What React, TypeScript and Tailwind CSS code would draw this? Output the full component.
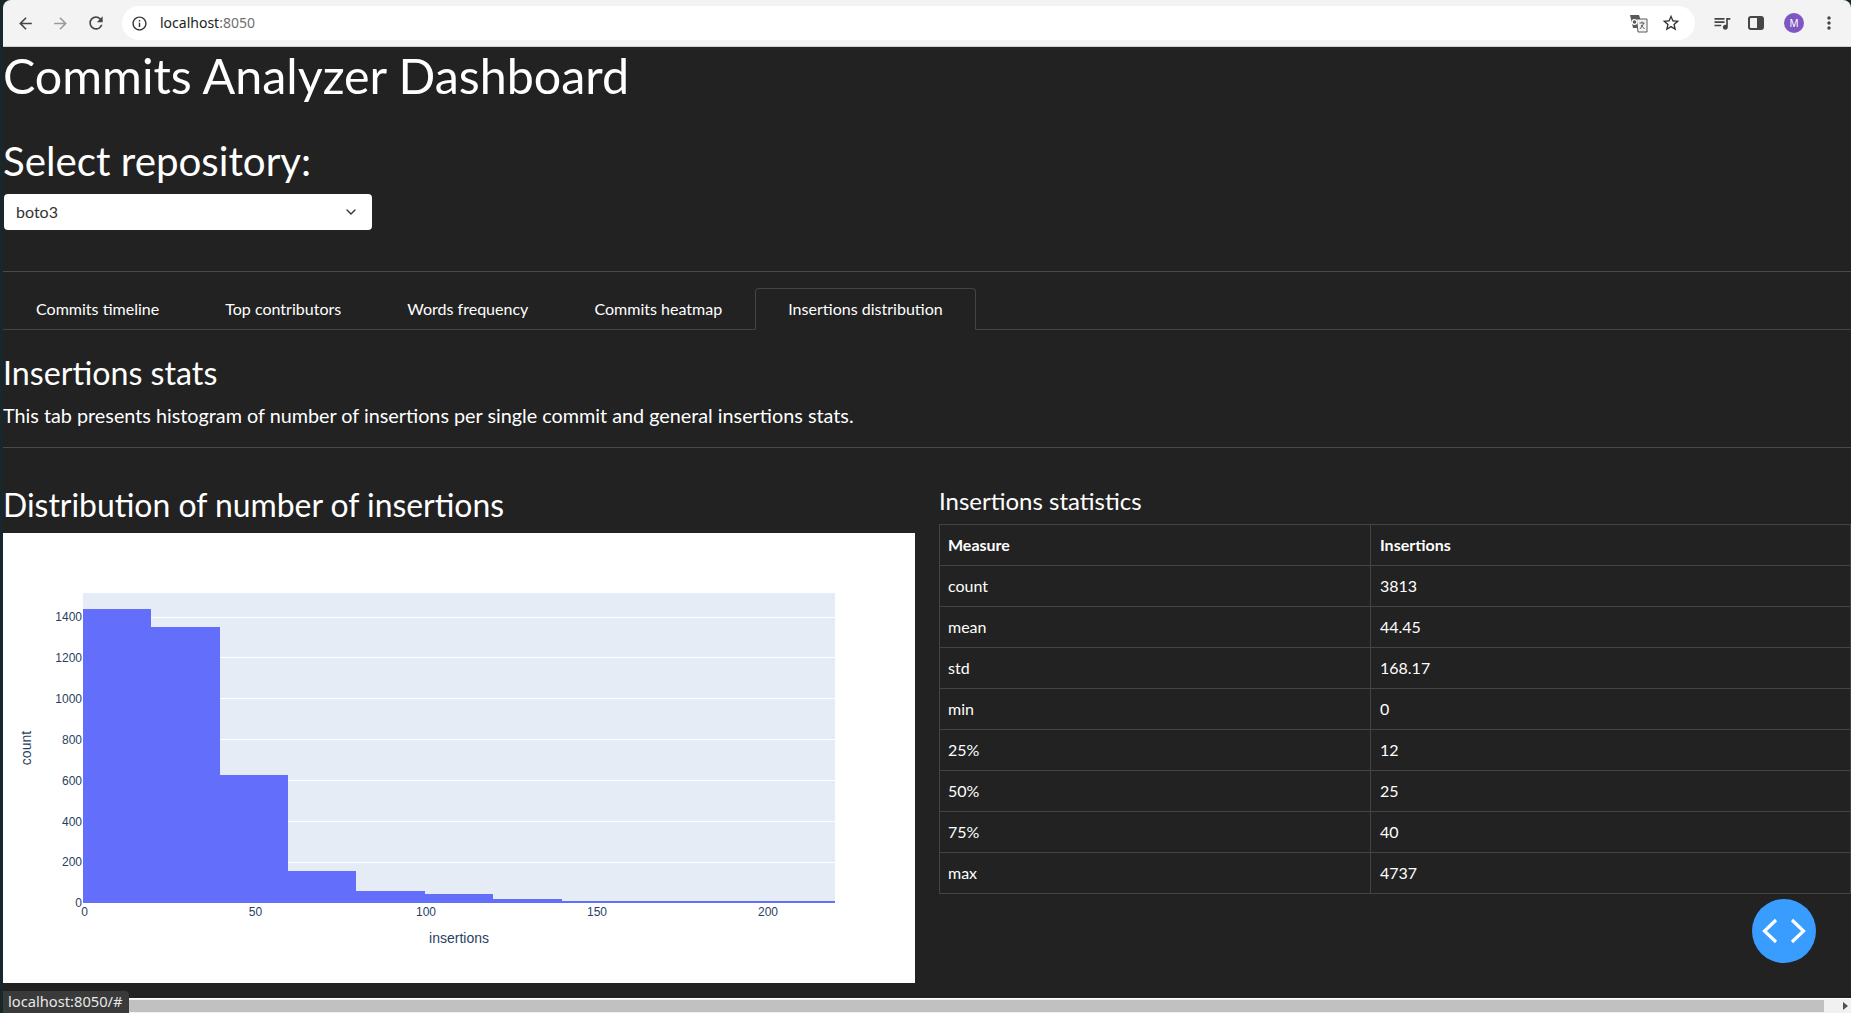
import {
  MdArrowBack,
  MdArrowForward,
  MdInfoOutline,
  MdMoreVert,
  MdQueueMusic,
  MdRefresh,
  MdStarBorder,
} from "react-icons/md";
import { ChevronDown } from "lucide-react";

const TABS = ["Commits timeline", "Top contributors", "Words frequency", "Commits heatmap", "Insertions distribution"];

const STATS = [
  ["count", "3813"],
  ["mean", "44.45"],
  ["std", "168.17"],
  ["min", "0"],
  ["25%", "12"],
  ["50%", "25"],
  ["75%", "40"],
  ["max", "4737"],
];

// coordinates inside the white chart panel (panel origin = 3,533)
const BARS = [
  [80, 76, 68, 294],
  [148, 94, 69, 276],
  [217, 242, 68, 128],
  [285, 338, 68, 32],
  [353, 358, 69, 12],
  [422, 361, 68, 9],
  [490, 366, 69, 4],
  [559, 368, 273, 2],
];
const Y_TICKS = [
  ["1400", 88],
  ["1200", 129],
  ["1000", 170],
  ["800", 211],
  ["600", 252],
  ["400", 293],
  ["200", 333],
  ["0", 374],
];
const X_TICKS = [
  ["0", 81.5],
  ["50", 252.5],
  ["100", 423],
  ["150", 594],
  ["200", 765],
];

function BrowserBar() {
  return (
    <div className="h-[47px] shrink-0 flex items-center bg-[#f3f3f3] border-b border-[#cfcfcf] rounded-tl-lg rounded-tr-lg text-[#454545] font-['Noto_Sans',sans-serif]">
      <div className="w-[119px] shrink-0 flex items-center pl-[13px] gap-[15px]">
        <MdArrowBack size={19} />
        <MdArrowForward size={19} className="text-[#9a9a9a] ml-[1px]" />
        <MdRefresh size={20} className="ml-[1px]" />
      </div>
      <div className="w-[1573px] h-[34px] shrink-0 bg-white rounded-full flex items-center pl-[9px]">
        <MdInfoOutline size={17} className="text-[#333333]" />
        <span className="ml-[12px] -mt-[2px] text-[14px] text-[#222222]">
          localhost<span className="text-[#6f6f6f]">:8050</span>
        </span>
        <div className="ml-auto mr-[14px] flex items-center gap-[13px]">
          <svg width="19" height="19" viewBox="0 0 19 19">
            <path d="M1 1h9l1 3v10H4z" fill="#5a5a5a" />
            <path d="M7.5 5H18v13H9z" fill="#f3f3f3" stroke="#5a5a5a" strokeWidth="1" />
            <circle cx="5.5" cy="8" r="2.4" fill="none" stroke="#ffffff" strokeWidth="1.2" />
            <path d="M10.5 9h5M13 7.5v1.5M11 15l4-6M12 11l3.5 4" fill="none" stroke="#5a5a5a" strokeWidth="1" />
          </svg>
          <MdStarBorder size={20} className="text-[#333333]" />
        </div>
      </div>
      <div className="flex-1 flex items-center pl-[17px] gap-[16px]">
        <MdQueueMusic size={20} />
        <svg width="16" height="14" viewBox="0 0 16 14">
          <rect x="1" y="1" width="14" height="12" rx="2" fill="none" stroke="#454545" strokeWidth="2" />
          <rect x="9" y="1" width="6" height="12" fill="#454545" />
        </svg>
        <div className="w-5 h-5 ml-[4px] rounded-full bg-[#7e57c2] text-white text-[10px] flex items-center justify-center">
          M
        </div>
        <MdMoreVert size={20} className="-ml-[1px]" />
      </div>
    </div>
  );
}

function Histogram() {
  return (
    <div className="w-[912px] h-[450px] bg-white">
      <svg width="912" height="450" viewBox="0 0 912 450" className="font-['Liberation_Sans',sans-serif]">
        <rect x="80" y="60" width="752" height="310" fill="#e5ecf6" />
        {[84, 124, 165, 206, 247, 288, 329].map((y) => (
          <rect key={y} x="80" y={y} width="752" height="1" fill="#ffffff" />
        ))}
        {BARS.map(([x, y, w, h]) => (
          <rect key={x} x={x} y={y} width={w} height={h} fill="#636efa" />
        ))}
        {Y_TICKS.map(([label, y]) => (
          <text key={label} x="79" y={y} textAnchor="end" fontSize="12" fill="#2a3f5f">
            {label}
          </text>
        ))}
        {X_TICKS.map(([label, x]) => (
          <text key={label} x={x} y="383" textAnchor="middle" fontSize="12" fill="#2a3f5f">
            {label}
          </text>
        ))}
        <text x="456" y="410" textAnchor="middle" fontSize="14" fill="#2a3f5f">
          insertions
        </text>
        <text x="0" y="0" transform="translate(28 215) rotate(-90)" textAnchor="middle" fontSize="14" fill="#2a3f5f">
          count
        </text>
      </svg>
    </div>
  );
}

function StatsTable() {
  return (
    <table className="w-full border-collapse text-[16px] leading-[24px] text-white">
      <thead>
        <tr className="h-[41px]">
          <th className="w-[431px] border border-[#444444] px-2 text-left font-bold">Measure</th>
          <th className="border border-[#444444] pl-[9px] pr-2 text-left font-bold">Insertions</th>
        </tr>
      </thead>
      <tbody>
        {STATS.map(([name, value]) => (
          <tr key={name} className="h-[41px]">
            <td className="border border-[#444444] px-2">{name}</td>
            <td className="border border-[#444444] pl-[9px] pr-2">{value}</td>
          </tr>
        ))}
      </tbody>
    </table>
  );
}

export default function App() {
  return (
    <div className="relative h-[1013px] w-full overflow-hidden flex bg-[#16282a] font-['Lato',sans-serif]">
      <div className="flex-1 min-w-0 ml-[3px] flex flex-col">
        <BrowserBar />
        <main className="flex-1 min-h-0 overflow-hidden bg-[#222222] text-white">
          <h1 className="text-[48.4px] leading-[56px] font-normal">Commits Analyzer Dashboard</h1>
          <h2 className="mt-[34px] text-[40.3px] leading-[48px] font-normal">Select repository:</h2>
          <div className="mt-[9px] ml-px w-[368px] h-9 bg-white rounded flex items-center justify-between pl-[12px] pr-[13px] text-[16px] text-[#333333]">
            boto3
            <ChevronDown size={16} />
          </div>

          <div className="mt-[41px] border-t border-[#4a4a4a]" />

          <div className="mt-[16px] h-[42px] flex items-stretch border-b border-[#444444] text-[16.05px]">
            {TABS.map((tab, i) => (
              <div
                key={tab}
                className={
                  i === 4
                    ? "-mb-px flex items-center px-8 border border-[#444444] border-b-[#222222] rounded-t bg-[#222222]"
                    : "-mb-px flex items-center px-8 border border-transparent"
                }
              >
                {tab}
              </div>
            ))}
          </div>

          <h3 className="mt-[24px] text-[32.2px] leading-[38px] font-normal">Insertions stats</h3>
          <p className="mt-[9px] text-[19.8px] leading-[28px]">
            This tab presents histogram of number of insertions per single commit and general insertions stats.
          </p>

          <div className="mt-[18px] border-t border-[#4a4a4a]" />

          <div className="mt-[37px] grid grid-cols-[936px_1fr]">
            <div>
              <h3 className="text-[31.9px] leading-[41px] font-normal">Distribution of number of insertions</h3>
              <div className="mt-[7px]">
                <Histogram />
              </div>
            </div>
            <div>
              <h4 className="mt-[1px] text-[24px] leading-[29px] font-normal mb-[9px]">Insertions statistics</h4>
              <StatsTable />
            </div>
          </div>
        </main>
        <div className="h-[15px] shrink-0 flex items-center bg-[#f1f1f1] border-t border-white">
          <div className="ml-[126px] w-[1695px] h-3 bg-[#c1c1c1]" />
          <div className="ml-auto mr-[3px] w-0 h-0 border-y-[4px] border-y-transparent border-l-[5px] border-l-[#505050]" />
        </div>
      </div>

      <div className="absolute left-[3px] bottom-0 h-[22px] w-[126px] rounded-tr bg-[#3a3a3a] pl-[5px] text-[14.7px] leading-[20px] text-[#e8e8e8] font-['Noto_Sans',sans-serif]">
        localhost:8050/#
      </div>

      <div className="absolute left-[1752px] top-[899px] w-16 h-16 rounded-full bg-[#399dff] flex items-center justify-center">
        <svg width="44" height="28" viewBox="0 0 44 28" fill="none" stroke="#ffffff" strokeWidth="3.2">
          <path d="M14 3 2.5 14 14 25" />
          <path d="M30 3 41.5 14 30 25" />
        </svg>
      </div>
    </div>
  );
}
